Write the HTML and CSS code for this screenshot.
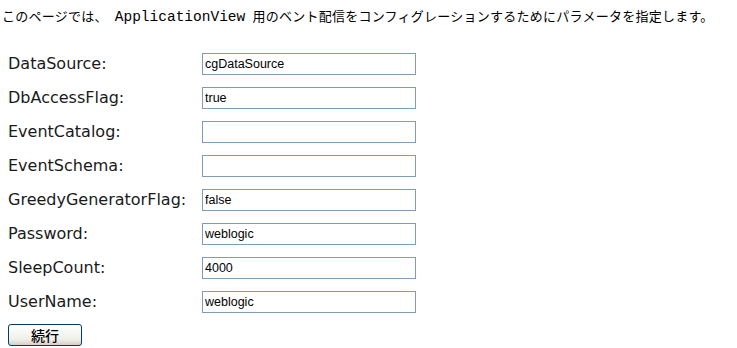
FILE: index.html
```html
<!DOCTYPE html>
<html lang="ja">
<head>
<meta charset="utf-8">
<title>ApplicationView</title>
<link rel="stylesheet" href="styles.css">
</head>
<body>
<p class="intro">このページでは、<span class="mono">ApplicationView</span> 用のベント配信をコンフィグレーションするためにパラメータを指定します。</p>
<form class="form">
  <div class="grid">
    <label class="label" for="f1">DataSource:</label>
    <input class="field" id="f1" type="text" value="cgDataSource">
    <label class="label" for="f2">DbAccessFlag:</label>
    <input class="field" id="f2" type="text" value="true">
    <label class="label" for="f3">EventCatalog:</label>
    <input class="field" id="f3" type="text" value="">
    <label class="label" for="f4">EventSchema:</label>
    <input class="field" id="f4" type="text" value="">
    <label class="label" for="f5">GreedyGeneratorFlag:</label>
    <input class="field" id="f5" type="text" value="false">
    <label class="label" for="f6">Password:</label>
    <input class="field" id="f6" type="text" value="weblogic">
    <label class="label" for="f7">SleepCount:</label>
    <input class="field" id="f7" type="text" value="4000">
    <label class="label" for="f8">UserName:</label>
    <input class="field" id="f8" type="text" value="weblogic">
  </div>
  <button class="submit" type="button">続行</button>
</form>
</body>
</html>
```
FILE: styles.css
```css
html, body {
  margin: 0;
  padding: 0;
  background: #ffffff;
}

.intro {
  margin: 6px 0 0 2px;
  height: 20px;
  font-family: "Noto Sans CJK JP", sans-serif;
  font-size: 13px;
  line-height: 20px;
  letter-spacing: 0.25px;
  color: #000000;
  white-space: nowrap;
}

.mono {
  margin: 0 4px 0 7px;
  font-family: "Liberation Mono", "Noto Sans CJK JP", monospace;
  font-size: 14.5px;
  letter-spacing: 0;
  line-height: 0;
}

.form {
  padding: 27px 0 0 8px;
}

.grid {
  display: grid;
  grid-template-columns: 194px 214px;
  row-gap: 12px;
  align-items: center;
}

.label {
  font-family: "DejaVu Sans", sans-serif;
  font-size: 16px;
  color: #1a1a1a;
  line-height: 22px;
}

.field {
  box-sizing: border-box;
  width: 214px;
  height: 22px;
  margin: 0;
  padding: 0 2px;
  border: 1px solid #7f9db9;
  font-family: "Liberation Sans", sans-serif;
  font-size: 12.5px;
  color: #000000;
  background: #ffffff;
  outline: none;
}

.submit {
  display: block;
  box-sizing: border-box;
  margin-top: 11px;
  width: 74px;
  height: 22px;
  padding: 0;
  border: 1px solid #003c74;
  border-radius: 3px;
  background: linear-gradient(#ffffff, #f0f0ea 70%, #d6d0c5);
  font-family: "Noto Sans CJK JP", sans-serif;
  font-size: 14px;
  font-weight: 500;
  line-height: 20px;
  color: #000000;
}
```
